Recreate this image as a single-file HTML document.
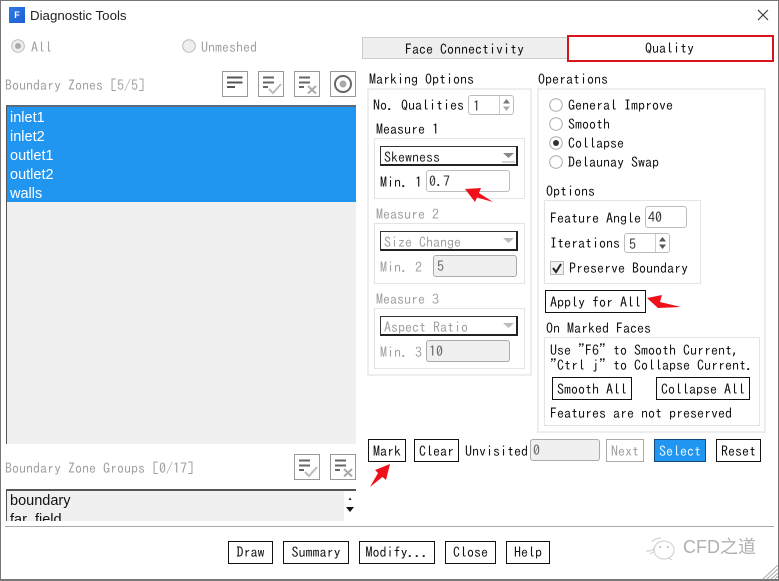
<!DOCTYPE html>
<html><head><meta charset="utf-8"><style>
html,body{margin:0;padding:0;background:#fff}
#w{position:relative;width:779px;height:581px;overflow:hidden;background:#fff;font-family:"IPAGothic","Liberation Mono",monospace}
#w div,#w svg{position:absolute;box-sizing:border-box}
.t{white-space:pre;font-size:14px;line-height:14px;color:#111}
.l{white-space:pre;font-family:"Liberation Sans",sans-serif;font-size:14.5px;line-height:19px;color:#fff;left:10px;margin-top:2px}
.b{border:1px solid #111;background:#fff;text-align:center;white-space:pre;font-size:14px;line-height:22px;color:#111}
.box{border:2px solid #eee}
.box2{border:1px solid #e4e4e4}
.i{border:1px solid #bdbdbd;border-radius:3px;background:#fff;white-space:pre;font-size:14px;line-height:21px;padding-left:2px;color:#333}
.d{background:#f0f0f0;color:#666;border-color:#aaa}
.c{border:1px solid #333;border-right:2px solid #222;border-bottom:2px solid #222;background:#fff;white-space:pre;font-size:14px;line-height:20px;padding-left:3px;color:#222}
.ib{border:1px solid #999;background:#fff}
#w .g{color:#a0a0a0}
</style></head><body><div id="w">
<div style="left:0;top:0;width:779px;height:581px;border:1px solid #777;border-width:1px 1px 2px 1px"></div>
<div style="left:9px;top:7px;width:16px;height:16px;background:linear-gradient(135deg,#2f7ae8,#1c5fd0);color:#fff;font:bold 9px/16px 'Liberation Sans',sans-serif;text-align:center">F</div>
<div style="left:30px;top:7px;font:13.3px/17px 'Liberation Sans',sans-serif;color:#222;white-space:pre">Diagnostic Tools</div>
<svg style="left:757px;top:9px" width="12" height="12"><path d="M1 1L11 11M11 1L1 11" stroke="#333" stroke-width="1.1" fill="none"/></svg>

<svg style="left:11px;top:39px" width="14" height="14"><circle cx="7" cy="7" r="6.3" fill="#eee" stroke="#bbb"/><circle cx="7" cy="7" r="3" fill="#aaa"/></svg>
<div class="t g" style="left:31px;top:40px">All</div>
<svg style="left:182px;top:39px" width="14" height="14"><circle cx="7" cy="7" r="6.3" fill="#eee" stroke="#bbb"/></svg>
<div class="t g" style="left:201px;top:40px">Unmeshed</div>
<div class="t g" style="left:5px;top:78px">Boundary Zones [5/5]</div>

<div class="ib" style="left:222px;top:71px;width:26px;height:26px"></div>
<svg style="left:222px;top:71px" width="26" height="26"><path d="M5 6.5H20.5M5 11.5H20.5M5 16H13" stroke="#555" stroke-width="2" fill="none"/></svg>
<div class="ib" style="left:258px;top:71px;width:26px;height:26px"></div>
<svg style="left:258px;top:71px" width="26" height="26"><path d="M5 6.5H16M5 11.5H16M5 16H10" stroke="#666" stroke-width="2" fill="none"/><path d="M11 18L15 22L23 13" stroke="#bbb" stroke-width="2" fill="none"/></svg>
<div class="ib" style="left:294px;top:71px;width:26px;height:26px"></div>
<svg style="left:294px;top:71px" width="26" height="26"><path d="M5 6.5H16M5 11.5H16M5 16H10" stroke="#666" stroke-width="2" fill="none"/><path d="M14 15L22 22.5M22 15L14 22.5" stroke="#aaa" stroke-width="2" fill="none"/></svg>
<div class="ib" style="left:330px;top:71px;width:26px;height:26px"></div>
<svg style="left:330px;top:71px" width="26" height="26"><circle cx="13" cy="13" r="8" fill="none" stroke="#666" stroke-width="2"/><circle cx="13" cy="13" r="3.5" fill="#aaa"/></svg>

<div style="left:6px;top:105px;width:350px;height:339px;background:#f0f0f0;border-top:2px solid #5a6a78;border-left:1px solid #555"></div>
<div style="left:7px;top:107px;width:349px;height:95px;background:#2196f0"></div>
<div class="l" style="top:107px">inlet1</div>
<div class="l" style="top:126px">inlet2</div>
<div class="l" style="top:145px">outlet1</div>
<div class="l" style="top:164px">outlet2</div>
<div class="l" style="top:183px">walls</div>

<div class="t g" style="left:5px;top:461px">Boundary Zone Groups [0/17]</div>
<div class="ib" style="left:294px;top:454px;width:26px;height:26px"></div>
<svg style="left:294px;top:454px" width="26" height="26"><path d="M5 6.5H16M5 11.5H16M5 16H10" stroke="#666" stroke-width="2" fill="none"/><path d="M11 18L15 22L23 13" stroke="#bbb" stroke-width="2" fill="none"/></svg>
<div class="ib" style="left:330px;top:454px;width:26px;height:26px"></div>
<svg style="left:330px;top:454px" width="26" height="26"><path d="M5 6.5H16M5 11.5H16M5 16H10" stroke="#666" stroke-width="2" fill="none"/><path d="M14 15L22 22.5M22 15L14 22.5" stroke="#aaa" stroke-width="2" fill="none"/></svg>
<div style="left:6px;top:489px;width:350px;height:32px;background:#f0f0f0;border-top:2px solid #555;border-left:1px solid #555;overflow:hidden"><div class="l" style="left:3px;top:0;color:#111;margin:0;top:1px">boundary</div><div class="l" style="left:3px;top:20px;color:#111;margin:0">far_field</div></div>
<div style="left:344px;top:491px;width:12px;height:30px;background:#fff"></div>
<svg style="left:344px;top:495px" width="12" height="22"><path d="M4.5 5L7.5 5L6 2.5Z" fill="#222"/><path d="M2 12H10L6 17Z" fill="#111"/></svg>
<div style="left:5px;top:526px;width:769px;height:1px;background:#aaa"></div>

<div style="left:362px;top:37px;width:206px;height:22px;background:#eee;border:1px solid #ccc"></div>
<div class="t" style="left:405px;top:42px">Face Connectivity</div>
<div style="left:567px;top:35px;width:207px;height:27px;background:#fff;border:2px solid #d8141c"></div>
<div class="t" style="left:645px;top:41px">Quality</div>

<div class="t" style="left:369px;top:72px">Marking Options</div>
<div class="box" style="left:367px;top:88px;width:165px;height:288px"></div>
<div class="t" style="left:373px;top:98px">No. Qualities</div>
<div class="i" style="left:468px;top:95px;width:46px;height:20px;line-height:20px;padding-left:4px">1</div>
<div style="left:499px;top:96px;width:1px;height:18px;background:#ccc"></div>
<svg style="left:500px;top:96px" width="13" height="18"><path d="M6.5 3L10 7.5H3Z" fill="#777"/><path d="M6.5 15L10 10.5H3Z" fill="#aaa"/></svg>
<div class="t" style="left:376px;top:122px">Measure 1</div>
<div class="box2" style="left:374px;top:138px;width:151px;height:61px"></div>
<div class="c" style="left:380px;top:146px;width:138px;height:20px">Skewness</div>
<svg style="left:501px;top:151px" width="15" height="13"><path d="M2 2H13L7.5 7Z" fill="#888"/><path d="M1 11H14" stroke="#aaa"/></svg>
<div class="t" style="left:380px;top:175px">Min. 1</div>
<div class="i" style="left:426px;top:170px;width:84px;height:22px">0.7</div>
<svg style="left:460px;top:184px" width="38" height="20"><path d="M5 5L21 4L19 9L33 18L17 13.5L15 18Z" fill="#f0101a"/></svg>

<div class="t g" style="left:376px;top:207px">Measure 2</div>
<div class="box2" style="left:374px;top:223px;width:151px;height:61px"></div>
<div class="c g" style="left:380px;top:231px;width:138px;height:20px">Size Change</div>
<svg style="left:501px;top:236px" width="15" height="13"><path d="M2 2H13L7.5 7Z" fill="#bbb"/></svg>
<div class="t g" style="left:380px;top:260px">Min. 2</div>
<div class="i d" style="left:433px;top:255px;width:84px;height:22px;padding-left:3px">5</div>

<div class="t g" style="left:376px;top:292px">Measure 3</div>
<div class="box2" style="left:374px;top:308px;width:151px;height:61px"></div>
<div class="c g" style="left:380px;top:316px;width:138px;height:20px">Aspect Ratio</div>
<svg style="left:501px;top:321px" width="15" height="13"><path d="M2 2H13L7.5 7Z" fill="#bbb"/></svg>
<div class="t g" style="left:380px;top:345px">Min. 3</div>
<div class="i d" style="left:426px;top:340px;width:84px;height:22px">10</div>

<div class="t" style="left:538px;top:72px">Operations</div>
<div class="box" style="left:537px;top:88px;width:229px;height:345px"></div>
<svg style="left:549px;top:98px" width="14" height="14"><circle cx="7" cy="7" r="6.3" fill="#fff" stroke="#aaa"/></svg>
<div class="t" style="left:568px;top:98px">General Improve</div>
<svg style="left:549px;top:117px" width="14" height="14"><circle cx="7" cy="7" r="6.3" fill="#fff" stroke="#aaa"/></svg>
<div class="t" style="left:568px;top:117px">Smooth</div>
<svg style="left:549px;top:136px" width="14" height="14"><circle cx="7" cy="7" r="6.3" fill="#fff" stroke="#aaa"/><circle cx="7" cy="7" r="3" fill="#333"/></svg>
<div class="t" style="left:568px;top:136px">Collapse</div>
<svg style="left:549px;top:155px" width="14" height="14"><circle cx="7" cy="7" r="6.3" fill="#fff" stroke="#aaa"/></svg>
<div class="t" style="left:568px;top:155px">Delaunay Swap</div>
<div class="t" style="left:546px;top:184px">Options</div>
<div class="box2" style="left:544px;top:200px;width:157px;height:84px"></div>
<div class="t" style="left:550px;top:211px">Feature Angle</div>
<div class="i" style="left:645px;top:206px;width:42px;height:22px">40</div>
<div class="t" style="left:550px;top:236px">Iterations</div>
<div class="i" style="left:624px;top:233px;width:46px;height:20px;line-height:20px;padding-left:4px">5</div>
<div style="left:655px;top:234px;width:1px;height:18px;background:#ccc"></div>
<svg style="left:656px;top:234px" width="13" height="18"><path d="M6.5 3L10 7.5H3Z" fill="#555"/><path d="M6.5 15L10 10.5H3Z" fill="#555"/></svg>
<div style="left:550px;top:261px;width:14px;height:14px;border:1px solid #bbb;background:#f2f2f2"></div>
<svg style="left:550px;top:261px" width="14" height="14"><path d="M3 7L6 11L11 3" stroke="#222" stroke-width="2" fill="none"/></svg>
<div class="t" style="left:569px;top:261px">Preserve Boundary</div>
<div class="b" style="left:545px;top:290px;width:101px;height:23px">Apply for All</div>
<svg style="left:645px;top:292px" width="38" height="20"><path d="M2 6L17 3L15 10L36 15L13 16Z" fill="#f0101a"/></svg>
<div class="t" style="left:546px;top:321px">On Marked Faces</div>
<div class="box2" style="left:544px;top:337px;width:216px;height:89px"></div>
<div class="t" style="left:550px;top:343px">Use "F6" to Smooth Current,</div>
<div class="t" style="left:550px;top:358px">"Ctrl j" to Collapse Current.</div>
<div class="b" style="left:552px;top:377px;width:80px;height:23px">Smooth All</div>
<div class="b" style="left:656px;top:377px;width:94px;height:23px">Collapse All</div>
<div class="t" style="left:550px;top:406px">Features are not preserved</div>

<div class="b" style="left:368px;top:439px;width:38px;height:23px">Mark</div>
<div class="b" style="left:414px;top:439px;width:45px;height:23px">Clear</div>
<div class="t" style="left:465px;top:444px">Unvisited</div>
<div class="i d" style="left:530px;top:439px;width:70px;height:22px">0</div>
<div class="b g" style="left:606px;top:439px;width:38px;height:23px;border-color:#aaa">Next</div>
<div class="b" style="left:654px;top:439px;width:52px;height:23px;background:#2196f0;color:#e8f4ff;border-color:#124a7a">Select</div>
<div class="b" style="left:716px;top:439px;width:45px;height:23px">Reset</div>
<svg style="left:368px;top:462px" width="24" height="28"><path d="M22 2L18 18L14.5 15L2 25L10 11L7 8Z" fill="#f0101a"/></svg>

<div class="b" style="left:228px;top:541px;width:45px;height:23px;line-height:21px">Draw</div>
<div class="b" style="left:283px;top:541px;width:66px;height:23px;line-height:21px">Summary</div>
<div class="b" style="left:359px;top:541px;width:76px;height:23px;line-height:21px">Modify...</div>
<div class="b" style="left:445px;top:541px;width:51px;height:23px;line-height:21px">Close</div>
<div class="b" style="left:506px;top:541px;width:44px;height:23px;line-height:21px">Help</div>

<svg style="left:644px;top:536px" width="36" height="26"><path d="M2 15C6 15 9 15 11 11M17 2C13 2 10 3 8 6M6 18L11 15" stroke="#ccc" fill="none"/><ellipse cx="20" cy="14" rx="10" ry="9" fill="none" stroke="#ccc"/><path d="M25 22L28 24" stroke="#ccc"/><circle cx="16" cy="11" r="1" fill="#bbb"/><circle cx="24" cy="11" r="1" fill="#bbb"/></svg>
<div style="left:683px;top:537px;font:18px/21px 'Liberation Sans','Noto Sans CJK SC',sans-serif;color:#b0b0b0;white-space:pre">CFD之道</div>
<svg style="left:762px;top:564px" width="16" height="15"><path d="M1 15L16 1M5 15L16 5M9 15L16 9M13 15L16 12" stroke="#aaa" fill="none"/></svg>
</div></body></html>
